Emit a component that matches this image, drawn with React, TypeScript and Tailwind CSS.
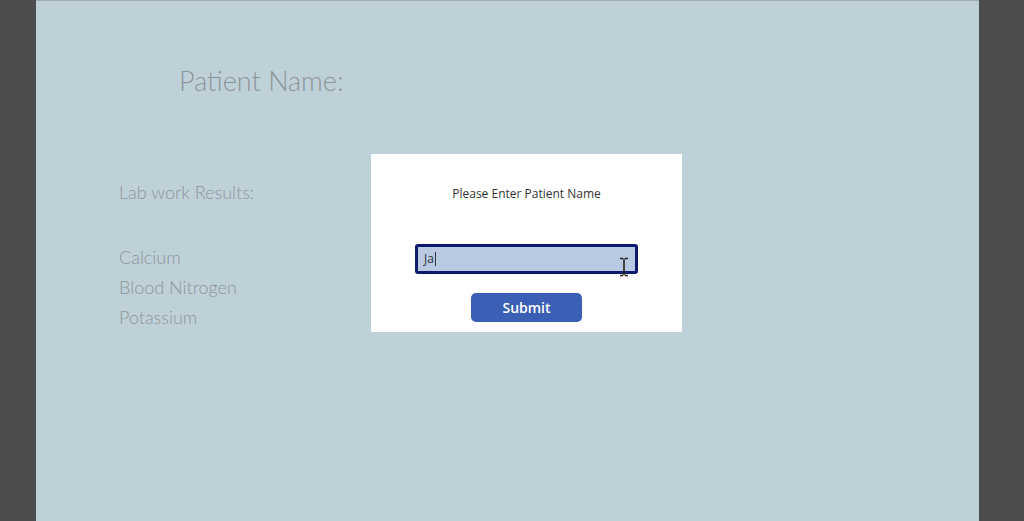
import React from 'react';

const labItems = ['Calcium', 'Blood Nitrogen', 'Potassium'];

// text cursor drawn over the input field
const IBeam: React.FC = () => (
  <svg className="absolute left-[201px] top-[10px]" width="10" height="20" viewBox="0 0 10 20">
    <path d="M1 1.5h3M6 1.5h3M5 1.5v17M1 18.5h3M6 18.5h3" stroke="#2b2118" strokeWidth="1.6" fill="none" />
  </svg>
);

export default function App() {
  return (
    <div className="flex h-[521px] w-full overflow-hidden bg-[#4c4e4d]">
      <div className="w-[36px] shrink-0" />

      <main className="h-full w-[943px] shrink-0 border-t border-[#a2acb0] bg-[#bfd1d8] font-['Lato',sans-serif] font-light text-[#8d9499]">
        <h1 className="pl-[143px] pt-[64px] text-[27px] leading-[32px]">Patient Name:</h1>

        <div className="mt-[57px] flex">
          <div className="w-[252px] shrink-0 pl-[83px] pt-[23px] text-[18px] leading-[30px] box-content">
            <div>Lab work Results:</div>
            <div className="mt-[35px]">
              {labItems.map((item) => (
                <div key={item}>{item}</div>
              ))}
            </div>
          </div>

          <div className="flex h-[178px] w-[311px] shrink-0 flex-col items-center bg-white font-['Open_Sans',sans-serif] font-normal">
            <p className="pt-[32px] text-[12px] leading-[16px] text-[#333333]">Please Enter Patient Name</p>

            <div className="relative mt-[42px] flex h-[30px] w-[223px] items-center rounded-[3px] border-[3px] border-[#0b1a6c] bg-[#b9c9e1] pl-[6px] text-[12px] leading-[16px] text-[#333333]">
              <span>Ja</span>
              <span className="ml-px inline-block h-[14px] w-px bg-[#333333]" />
              <IBeam />
            </div>

            <button className="mt-[19px] h-[29px] w-[111px] rounded-[5px] bg-[#3a5fb5] text-[14px] font-semibold leading-[20px] text-white">
              Submit
            </button>
          </div>
        </div>
      </main>

      <div className="flex-1" />
    </div>
  );
}
